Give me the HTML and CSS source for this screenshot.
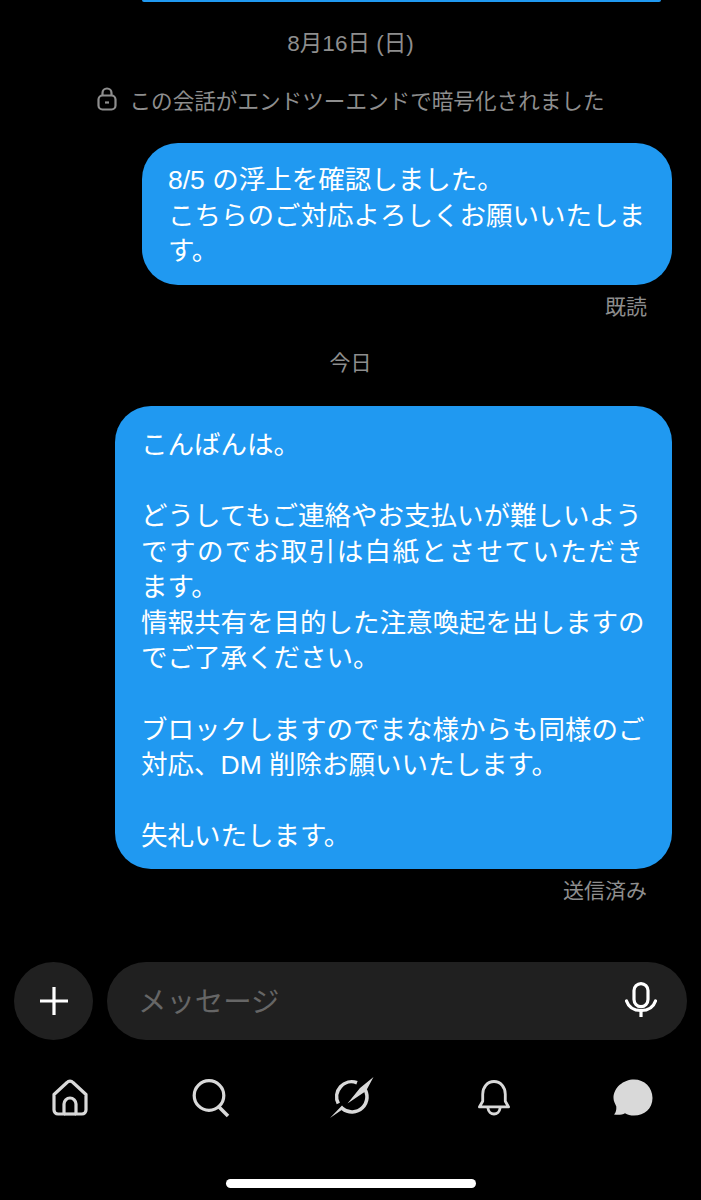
FILE: index.html
```html
<!DOCTYPE html>
<html lang="ja">
<head>
    <meta charset="UTF-8" />
    <meta name="viewport" content="width=device-width, initial-scale=1.0" />
    <title>メッセージ</title>
    <link rel="stylesheet" href="styles.css">
</head>
<body>
    <div class="screen">
        <div class="thread">
            <div class="prev-bubble"></div>
            <div class="day day-first">8月16日 (日)</div>
            <div class="notice">
                <svg class="lock" viewBox="0 0 20 24" width="20" height="24" fill="none" stroke="#8e8e8e" stroke-width="2.2">
                    <rect x="1.500" y="8.500" width="17" height="14" rx="4" />
                    <path d="M5.500 8.500V6a4.500 4.500 0 0 1 9 0v2.500" />
                    <path d="M8 15.500h4" />
                </svg>
                <span>この会話がエンドツーエンドで暗号化されました</span>
            </div>
            <div class="bubble bubble-short">8/5 の浮上を確認しました。<br>こちらのご対応よろしくお願いいたします。</div>
            <div class="status status-read">既読</div>
            <div class="day day-today">今日</div>
            <div class="bubble bubble-long">こんばんは。<br><br>どうしてもご連絡やお支払いが難しいよう<br><span class="wide-line">ですのでお取引は白紙とさせていただき</span><br>ます。<br>情報共有を目的した注意喚起を出しますの<br>でご了承ください。<br><br>ブロックしますのでまな様からも同様のご<br>対応、DM 削除お願いいたします。<br><br>失礼いたします。</div>
            <div class="status status-sent">送信済み</div>
        </div>

        <div class="composer">
            <div class="plus-button">
                <svg viewBox="0 0 30 30" width="30" height="30" stroke="#fff" stroke-width="3.200">
                    <path d="M15 1v28M1 15h28" />
                </svg>
            </div>
            <div class="input-pill">
                <span class="placeholder">メッセージ</span>
                <svg viewBox="0 0 32 36" width="32" height="36" fill="none" stroke="#fff" stroke-width="3.200">
                    <rect x="9" y="1.600" width="14" height="23" rx="7" />
                    <path d="M1.500 19c2 6 7.500 9.500 14.500 9.500S28.500 25 30.500 19" stroke-linecap="round" />
                    <path d="M16 28.500V35" />
                </svg>
            </div>
        </div>

        <nav class="tabbar">
            <svg viewBox="1 0 38 38" width="38" height="38" fill="none" stroke="#d9d9d9" stroke-width="3.200" stroke-linejoin="round">
                <path d="M3 15.500 16 3.500a4 4 0 0 1 6 0l13 12V31a4 4 0 0 1-4 4h-6V25a6 6 0 0 0-12 0v10H7a4 4 0 0 1-4-4z" />
                <path d="M13 35h12" />
            </svg>
            <svg viewBox="1 0 38 38" width="38" height="38" fill="none" stroke="#d9d9d9" stroke-width="3.200">
                <circle cx="17" cy="16.500" r="14.800" />
                <path d="M26.500 27.500 36 37" stroke-width="3.600" />
            </svg>
            <svg viewBox="1 -1 48 44" width="48" height="44" fill="none">
                <path d="M29 5.700A15 15 0 0 0 10.300 26.500M36 11A15 15 0 0 1 14.500 31.600" stroke="#d9d9d9" stroke-width="3.600" />
                <path d="M45.500 0 38 14 19.500 26.500 32 11zM2 41 14 28.500 16.500 31z" fill="#d9d9d9" />
            </svg>
            <svg viewBox="0 0 34 38" width="32" height="36" fill="none" stroke="#d9d9d9" stroke-width="3">
                <path d="M1.500 28.500h31l-3.500-6V15C29 7.500 24 1.500 17 1.500S5 7.500 5 15v7.500z" stroke-linejoin="round" />
                <path d="M10.500 29.500c.5 4 3.500 6.500 6.500 6.500s6-2.500 6.500-6.500" />
            </svg>
            <svg viewBox="0 0 44 38" width="44" height="38" fill="#d9d9d9">
                <path d="M21 .5C31.500.5 39.500 8.500 39.500 19S31.500 36.500 21 36.500c-3.500 0-6.500-.8-9-2.300-2.500 1.500-6.500 1.800-11 1.300 2-2 2.500-4.500 2.300-8C2 24.500.5 22 .5 19 .5 8.500 10.500.5 21 .5z" />
            </svg>
        </nav>

        <div class="home-indicator"></div>
    </div>
</body>
</html>
```
FILE: styles.css
```css
* {
    box-sizing: border-box;
}

body {
    margin: 0;
    background: #000;
    font-family: "Liberation Sans", "Noto Sans CJK JP", sans-serif;
}

.screen {
    width: 701px;
    height: 1200px;
    overflow: hidden;
    display: flex;
    flex-direction: column;
}

.thread {
    height: 962px;
    display: flex;
    flex-direction: column;
}

.prev-bubble {
    height: 2px;
    margin: 0 40px 0 142px;
    background: #2099f1;
    border-radius: 0 0 14px 14px;
}

.day {
    text-align: center;
    font-size: 21px;
    line-height: 28px;
    color: #8e8e8e;
}

.day-first {
    margin-top: 28px;
    font-size: 22.500px;
}

.day-today {
    margin-top: 28px;
}

.notice {
    margin-top: 26px;
    height: 30px;
    display: flex;
    align-items: center;
    justify-content: center;
    gap: 12px;
    padding-left: 1px;
    font-size: 21.600px;
    color: #8e8e8e;
}

.bubble {
    align-self: flex-end;
    margin-right: 29px;
    background: #2099f1;
    color: #fff;
    font-size: 26.500px;
    line-height: 35.600px;
    border-radius: 36px;
    white-space: nowrap;
}

.bubble-short {
    width: 530px;
    margin-top: 29px;
    padding: 20px 26px 15px;
    white-space: normal;
}

.bubble-long {
    width: 557px;
    margin-top: 29px;
    padding: 22px 26px 14px;
}

.wide-line {
    letter-spacing: 1.450px;
}

.status {
    text-align: right;
    padding-right: 54px;
    font-size: 21px;
    line-height: 28px;
    color: #8e8e8e;
}

.status-read {
    margin-top: 8px;
}

.status-sent {
    margin-top: 8px;
}

.composer {
    height: 78px;
    padding: 0 14px;
    display: flex;
    gap: 14px;
}

.plus-button {
    width: 79px;
    height: 78px;
    border-radius: 50%;
    background: #202020;
    display: flex;
    align-items: center;
    justify-content: center;
}

.input-pill {
    flex: 1;
    background: #202020;
    border-radius: 39px;
    display: flex;
    align-items: center;
    justify-content: space-between;
    padding: 0 30px 3px 31px;
}

.placeholder {
    font-size: 28.400px;
    color: #666;
}

.tabbar {
    height: 56px;
    margin-top: 30px;
    display: grid;
    grid-template-columns: repeat(5, 141px);
    justify-items: center;
    align-items: center;
}

.tabbar svg {
    overflow: visible;
}

.home-indicator {
    width: 250px;
    height: 9px;
    margin: 53px auto 0;
    background: #fff;
    border-radius: 5px;
}
```
